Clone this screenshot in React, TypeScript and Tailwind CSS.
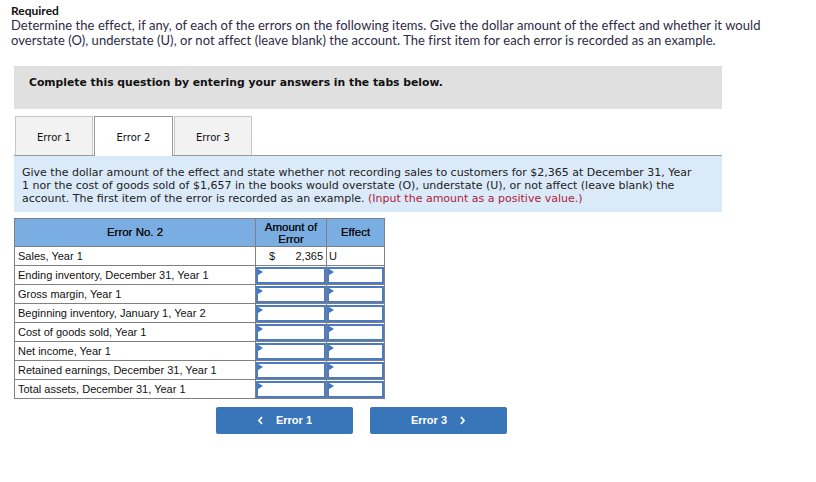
import React from "react";

const rows = [
  "Sales, Year 1",
  "Ending inventory, December 31, Year 1",
  "Gross margin, Year 1",
  "Beginning inventory, January 1, Year 2",
  "Cost of goods sold, Year 1",
  "Net income, Year 1",
  "Retained earnings, December 31, Year 1",
  "Total assets, December 31, Year 1",
];

function InputCell() {
  return (
    <div className="relative h-[17px] border-2 border-[#4c7cbf] bg-white">
      <span className="absolute left-0 top-0 h-0 w-0 border-y-[3px] border-l-[5px] border-y-transparent border-l-[#3a78c9]" />
    </div>
  );
}

export default function App() {
  return (
    <div className="w-[816px] h-[482px] bg-white text-[#2e2a44]">
      <div className="px-[11px] pt-[4px] font-['Lato',sans-serif]">
        <div className="text-[12px] font-bold leading-[14px] text-[#111]">Required</div>
        <p className="text-[13px] leading-[15px] tracking-[0.05px]">
          Determine the effect, if any, of each of the errors on the following items. Give the dollar amount of the effect and whether it would
          overstate (O), understate (U), or not affect (leave blank) the account. The first item for each error is recorded as an example.
        </p>
      </div>

      <div className="mx-[14px] mt-[18px] w-[708px] font-['DejaVu_Sans',Verdana,sans-serif]">
        <div className="h-[43px] bg-[#e0e0e0] pt-[10px] pl-[15px] text-[10.8px] font-bold leading-[14px] text-[#111]">
          Complete this question by entering your answers in the tabs below.
        </div>

        <div className="mt-[7px] flex items-end border-b border-[#9a9a9a] h-[40px]">
          <div className="ml-[1px] w-[78px] h-[39px] bg-[#f2f2f2] border border-b-0 border-[#c8c8c8] flex items-center justify-center pt-[2px] text-[10px] text-[#111]">
            Error 1
          </div>
          <div className="ml-[1px] w-[79px] h-[40px] -mb-px bg-white border border-b-0 border-[#9a9a9a] flex items-center justify-center pt-[2px] text-[10px] text-[#111]">
            Error 2
          </div>
          <div className="ml-[1px] w-[78px] h-[39px] bg-[#f2f2f2] border border-b-0 border-[#c8c8c8] flex items-center justify-center pt-[2px] text-[10px] text-[#111]">
            Error 3
          </div>
        </div>

        <div className="bg-[#daeaf8] px-[8px] pt-[10px] pb-[7px] text-[11px] leading-[13px] text-[#222]">
          Give the dollar amount of the effect and state whether not recording sales to customers for $2,365 at December 31, Year
          <br />
          1 nor the cost of goods sold of $1,657 in the books would overstate (O), understate (U), or not affect (leave blank) the
          <br />
          account. The first item of the error is recorded as an example.{" "}
          <span className="text-[#b0203a]">(Input the amount as a positive value.)</span>
        </div>
      </div>

      <table className="ml-[14px] mt-[6px] border-collapse font-['Liberation_Sans',Arial,sans-serif] text-[11px] text-[#111]">
        <thead>
          <tr className="bg-[#7aaee3] h-[28px]">
            <th className="w-[241px] border border-[#808080] font-normal text-[11.5px] [text-shadow:0_0_0.3px_#111]">Error No. 2</th>
            <th className="w-[71px] border border-[#808080] font-normal text-[11.5px] leading-[12px] [text-shadow:0_0_0.3px_#111]">
              Amount of
              <br />
              Error
            </th>
            <th className="w-[58px] border border-[#808080] font-normal text-[11.5px] [text-shadow:0_0_0.3px_#111]">Effect</th>
          </tr>
        </thead>
        <tbody>
          {rows.map((label, i) => (
            <tr key={label} className="h-[19px]">
              <td className="border border-[#808080] pl-[3px] leading-[17px]">{label}</td>
              {i === 0 ? (
                <>
                  <td className="border border-[#808080] px-[3px]">
                    <div className="flex justify-between pl-[10px]">
                      <span>$</span>
                      <span>2,365</span>
                    </div>
                  </td>
                  <td className="border border-[#808080] pl-[2px]">U</td>
                </>
              ) : (
                <>
                  <td className="border border-[#808080] p-0">
                    <InputCell />
                  </td>
                  <td className="border border-[#808080] p-0">
                    <InputCell />
                  </td>
                </>
              )}
            </tr>
          ))}
        </tbody>
      </table>

      <div className="ml-[216px] mt-[8px] flex gap-[17px] font-['Liberation_Sans',Arial,sans-serif] text-[11px] font-bold text-white">
        <button className="w-[137px] h-[27px] rounded-[2px] bg-[#3975b9] flex items-center justify-center gap-[12px]">
          <svg width="7" height="9" viewBox="0 0 7 9">
            <path d="M5 1 L2 4.5 L5 8" fill="none" stroke="white" strokeWidth="1.8" />
          </svg>
          <span>Error 1</span>
        </button>
        <button className="w-[137px] h-[27px] rounded-[2px] bg-[#3975b9] flex items-center justify-center gap-[12px]">
          <span>Error 3</span>
          <svg width="7" height="9" viewBox="0 0 7 9">
            <path d="M2 1 L5 4.5 L2 8" fill="none" stroke="white" strokeWidth="1.8" />
          </svg>
        </button>
      </div>
    </div>
  );
}
